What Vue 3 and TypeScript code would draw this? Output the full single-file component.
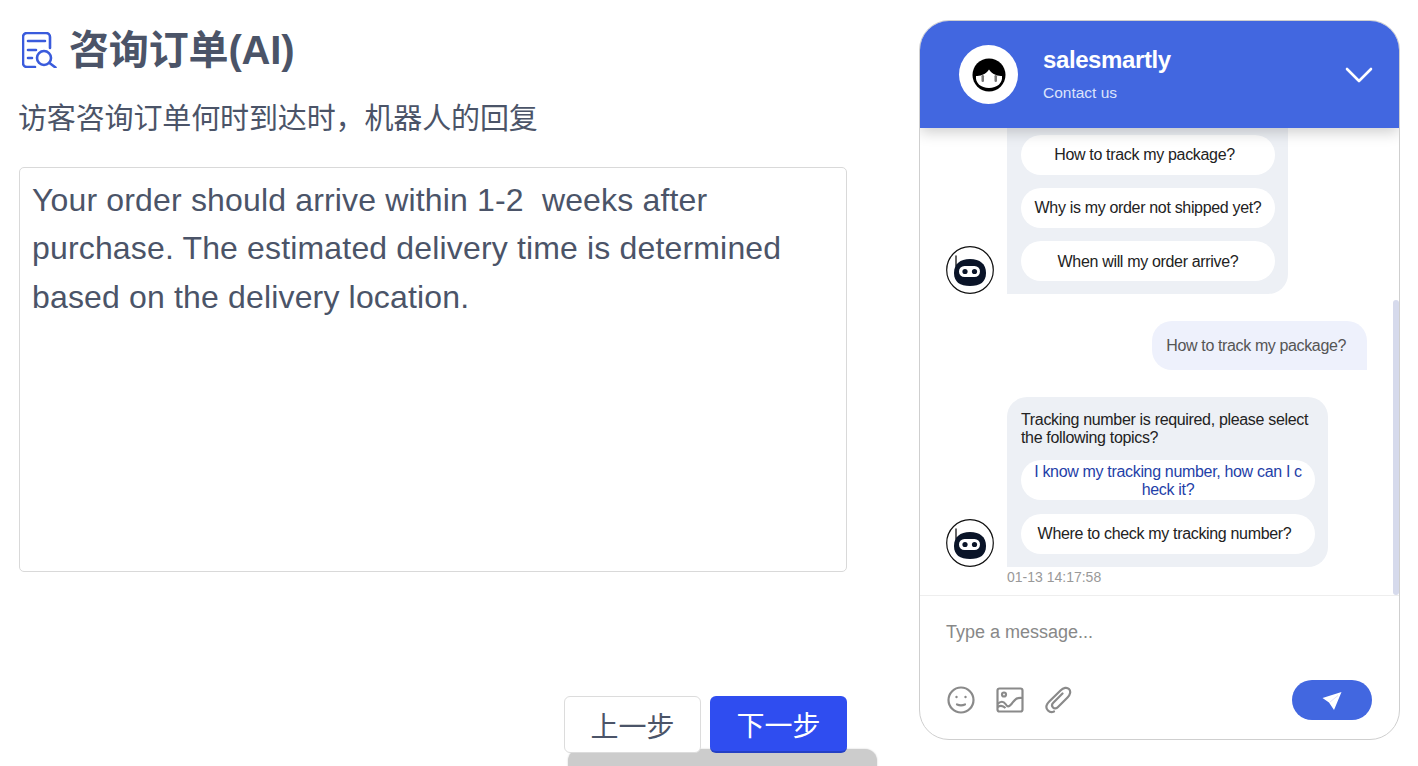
<script setup lang="ts">
const firstOptions = [
  { text: 'How to track my package?', off: true },
  { text: 'Why is my order not shipped yet?', off: false },
  { text: 'When will my order arrive?', off: false },
]
const replyText = 'Your order should arrive within 1-2  weeks after purchase. The estimated delivery time is determined based on the delivery location.'
</script>

<template>
  <div class="page">
    <div class="left">
      <div class="title-row">
        <svg class="title-icon" viewBox="0 0 36 36" fill="none" stroke="#3a5bdc" stroke-width="2.600" stroke-linecap="round" stroke-linejoin="round">
          <path d="M13 35H5a4 4 0 0 1-4-4V5a4 4 0 0 1 4-4h19a4 4 0 0 1 4 4v11" />
          <path d="M6 9h17M6 18h8M6 26h4" />
          <circle cx="22" cy="26" r="7" />
          <path d="M27.500 31l6 4.500" />
        </svg>
        <h1>咨询订单(AI)</h1>
      </div>
      <p class="subtitle">访客咨询订单何时到达时，机器人的回复</p>
      <div class="editor">{{ replyText }}</div>
      <div class="actions">
        <button class="btn">上一步</button>
        <button class="btn primary">下一步</button>
      </div>
    </div>

    <div class="widget">
      <div class="head">
        <div class="avatar">
          <svg viewBox="0 0 36 36" width="36" height="36">
            <circle cx="18" cy="18" r="16.500" fill="#000" />
            <path d="M5 19c3 0 10-1 13-6.500C21 18 28 19 31 19c1 7-5 12-13 12S4 26 5 19z" fill="#fff" />
            <rect x="10.500" y="18" width="2.500" height="7" rx="1.200" fill="#777" />
            <rect x="23.500" y="18" width="2.500" height="7" rx="1.200" fill="#777" />
          </svg>
        </div>
        <div class="head-text">
          <div class="name">salesmartly</div>
          <div class="contact">Contact us</div>
        </div>
        <svg class="chevron" viewBox="0 0 28 18" fill="none" stroke="#fff" stroke-width="2.600" stroke-linecap="round" stroke-linejoin="round">
          <path d="M2 3l12 12L26 3" />
        </svg>
      </div>

      <div class="messages">
        <div class="row">
          <svg class="bot" viewBox="0 0 48 48">
            <circle cx="24" cy="24" r="23.300" fill="#fff" stroke="#111" stroke-width="1.200" />
            <path d="M10 10v10" stroke="#333" stroke-width="1.500" stroke-linecap="round" />
            <path d="M8 27c0-9 6-14 16-14s16 5 16 14-6 13-16 13-16-4-16-13z" fill="#0a1428" />
            <rect x="13" y="20" width="21" height="11" rx="5.500" fill="#fff" />
            <circle cx="19" cy="25.500" r="2.600" fill="#0a1428" />
            <circle cx="28.500" cy="25.500" r="2.600" fill="#0a1428" />
          </svg>
          <div class="bubble first">
            <div v-for="(o, i) in firstOptions" :key="o.text" class="option" :class="{ off: o.off, up: i < 2 }">{{ o.text }}</div>
          </div>
        </div>

        <div class="user-bubble">How to track my package?</div>

        <div class="group">
          <div class="row">
            <svg class="bot" viewBox="0 0 48 48">
              <circle cx="24" cy="24" r="23.300" fill="#fff" stroke="#111" stroke-width="1.200" />
              <path d="M10 10v10" stroke="#333" stroke-width="1.500" stroke-linecap="round" />
              <path d="M8 27c0-9 6-14 16-14s16 5 16 14-6 13-16 13-16-4-16-13z" fill="#0a1428" />
              <rect x="13" y="20" width="21" height="11" rx="5.500" fill="#fff" />
              <circle cx="19" cy="25.500" r="2.600" fill="#0a1428" />
              <circle cx="28.500" cy="25.500" r="2.600" fill="#0a1428" />
            </svg>
            <div class="bubble second">
              <div class="bubble-text">Tracking number is required, please select the following topics?</div>
              <div class="option picked">I know my tracking number, how can I check it?</div>
              <div class="option off up">Where to check my tracking number?</div>
            </div>
          </div>
          <div class="time">01-13 14:17:58</div>
        </div>
        <div class="scrollbar"></div>
      </div>

      <div class="composer">
        <div class="placeholder">Type a message...</div>
        <div class="tools">
          <svg class="tool" viewBox="0 0 28 28" fill="none" stroke="#8a8a8a" stroke-width="2.200" stroke-linecap="round">
            <circle cx="14" cy="14" r="12.500" />
            <circle cx="9.500" cy="11" r="1.200" fill="#8a8a8a" stroke="none" />
            <circle cx="18.500" cy="11" r="1.200" fill="#8a8a8a" stroke="none" />
            <path d="M10 18.500c2.500 1 5.500 1 8 0" />
          </svg>
          <svg class="tool" viewBox="0 0 28 28" fill="none" stroke="#8a8a8a" stroke-width="2.200" stroke-linejoin="round">
            <rect x="1.500" y="2.500" width="25" height="23" rx="2" />
            <circle cx="8" cy="8.500" r="2" />
            <path d="M1.500 18c3-3 6-3 8 0s3 3.500 6 0 4-7 11-6" />
            <path d="M1.500 21c3-2 6-1 8 1" />
          </svg>
          <svg class="tool" viewBox="0 0 28 28" fill="none" stroke="#8a8a8a" stroke-width="2.200" stroke-linecap="round">
            <path d="M9 25.500c-2 1-4.500.5-6-1s-2-4-1-6c.6-1.300 1.500-2.200 2.500-3.200L15.500 4.500c3-3 6.500-3.500 8.500-1.500s1.500 5.500-1.500 8.500L13 21c-1.500 1.500-3.500 2-5 .5s-1-3.500.5-5l9-9" />
          </svg>
          <button class="send">
            <svg viewBox="0 0 20 20" width="20" height="20">
              <path d="M19.500 2L.5 8l6.500 4.500 5 7.500z" fill="#fff" />
              <path d="M16 5.500l-8 6.500" stroke="#d5d0f7" stroke-width="0.700" />
            </svg>
          </button>
        </div>
      </div>
    </div>

    <div class="peek"></div>
  </div>
</template>

<style>
body {
  background: #fff;
}
</style>

<style scoped>
.page {
  position: relative;
  display: flex;
  gap: 72px;
  height: 766px;
  padding-left: 19px;
  box-sizing: border-box;
  overflow: hidden;
  font-family: "Liberation Sans", "Noto Sans CJK SC", sans-serif;
  color: #4b5468;
}

.left {
  display: flex;
  flex-direction: column;
  width: 828px;
  flex-shrink: 0;
}

.title-row {
  display: flex;
  align-items: center;
  gap: 11px;
  height: 60px;
  margin-top: 20px;
  padding-left: 3px;
}

.title-icon {
  width: 36px;
  height: 36px;
}

h1 {
  margin: 0;
  font-size: 40px;
  font-weight: 700;
  line-height: 60px;
  letter-spacing: -0.15px;
}

.subtitle {
  margin: 18px 0 0 -1px;
  font-size: 29px;
  line-height: 42px;
  letter-spacing: -0.13px;
}

.editor {
  margin-top: 27px;
  height: 405px;
  box-sizing: border-box;
  padding: 8px 12px;
  border: 1px solid #d9d9d9;
  border-radius: 5px;
  font-size: 32px;
  line-height: 48.300px;
  letter-spacing: 0.16px;
  white-space: pre-wrap;
}

.actions {
  position: relative;
  z-index: 1;
  display: flex;
  justify-content: flex-end;
  gap: 9px;
  margin-top: 124px;
}

.btn {
  width: 137px;
  height: 57px;
  padding: 0;
  border: 1px solid #dcdcdc;
  border-radius: 6px;
  background: #fff;
  color: #4b5468;
  font-family: inherit;
  font-size: 28px;
}

.btn.primary {
  border: none;
  border-bottom: 2px solid #2440c4;
  background: #2f4df0;
  color: #fff;
}

.widget {
  display: flex;
  flex-direction: column;
  width: 481px;
  height: 720px;
  margin-top: 20px;
  box-sizing: border-box;
  border: 1px solid #cfcfcf;
  border-radius: 30px;
  overflow: hidden;
  background: #fff;
  flex-shrink: 0;
}

.head {
  position: relative;
  z-index: 2;
  display: flex;
  align-items: center;
  height: 107px;
  flex-shrink: 0;
  padding: 0 26px 0 39px;
  background: #4267e0;
  box-shadow: 0 4px 14px rgba(0, 0, 0, 0.2);
  color: #fff;
}

.avatar {
  display: flex;
  align-items: center;
  justify-content: center;
  width: 59px;
  height: 59px;
  border-radius: 50%;
  background: #fff;
}

.head-text {
  flex: 1;
  margin-left: 25px;
}

.name {
  margin-top: -2px;
  font-size: 24px;
  font-weight: 700;
  line-height: 28px;
  letter-spacing: -0.4px;
}

.contact {
  margin-top: 10px;
  font-size: 15.500px;
  line-height: 18px;
  color: #dbe3fb;
}

.chevron {
  width: 28px;
  height: 18px;
}

.messages {
  position: relative;
  flex: 1;
  display: flex;
  flex-direction: column;
  justify-content: flex-end;
  min-height: 0;
  gap: 27px;
  padding: 0 32px 9px 26px;
  overflow: hidden;
  font-size: 16px;
  line-height: 18px;
  letter-spacing: -0.33px;
  color: #222;
}

.row {
  display: flex;
  align-items: flex-end;
  gap: 13px;
}

.bot {
  width: 48px;
  height: 48px;
  flex-shrink: 0;
}

.bubble {
  display: flex;
  flex-direction: column;
  flex-shrink: 0;
  gap: 14px;
  box-sizing: border-box;
  padding: 13px 13px 13px 14px;
  border-radius: 20px 20px 20px 0;
  background: #edf0f5;
}

/* top of this one is scrolled away under the header */
.bubble.first {
  width: 281px;
  padding-top: 40px;
  gap: 13px;
}

.bubble.second {
  width: 321px;
}

.bubble-text {
  padding-top: 1px;
  margin-bottom: -1px;
}

.option {
  display: flex;
  align-items: center;
  justify-content: center;
  min-height: 40px;
  box-sizing: border-box;
  padding: 3px 13px 1px;
  border-radius: 20px;
  background: #fff;
  text-align: center;
  word-break: break-all;
}

/* these labels sit a little off centre in the original */
.option.off {
  padding-right: 20px;
}

.option.up {
  padding-top: 2px;
  padding-bottom: 2px;
}

.option.picked {
  color: #1f3fa8;
}

.user-bubble {
  align-self: flex-end;
  padding: 16px 21px 15px 14px;
  border-radius: 20px 20px 0 20px;
  background: #eef1fc;
  letter-spacing: -0.37px;
  color: #555;
}

.time {
  margin: 2px 0 0 61px;
  font-size: 14px;
  line-height: 17px;
  letter-spacing: 0;
  color: #999;
}

.scrollbar {
  position: absolute;
  right: 0;
  bottom: 0;
  width: 6px;
  height: 295px;
  background: #d6daec;
  border-radius: 3px;
}

.composer {
  flex-shrink: 0;
  height: 144px;
  box-sizing: border-box;
  border-top: 1px solid #eee;
  padding: 25px 27px 0;
}

.placeholder {
  margin-left: -1px;
  font-size: 18px;
  line-height: 22px;
  color: #888;
}

.tools {
  display: flex;
  align-items: center;
  gap: 21px;
  margin-top: 37px;
}

.tool {
  width: 28px;
  height: 28px;
}

.send {
  display: flex;
  align-items: center;
  justify-content: center;
  width: 80px;
  height: 40px;
  margin-left: auto;
  padding: 0;
  border: none;
  border-radius: 20px;
  background: #4267e0;
}

.peek {
  position: absolute;
  left: 568px;
  top: 749px;
  width: 309px;
  height: 30px;
  border-radius: 12px;
  background: #cccccc;
  box-shadow: 0 0 2px rgba(0, 0, 0, 0.2);
}
</style>
